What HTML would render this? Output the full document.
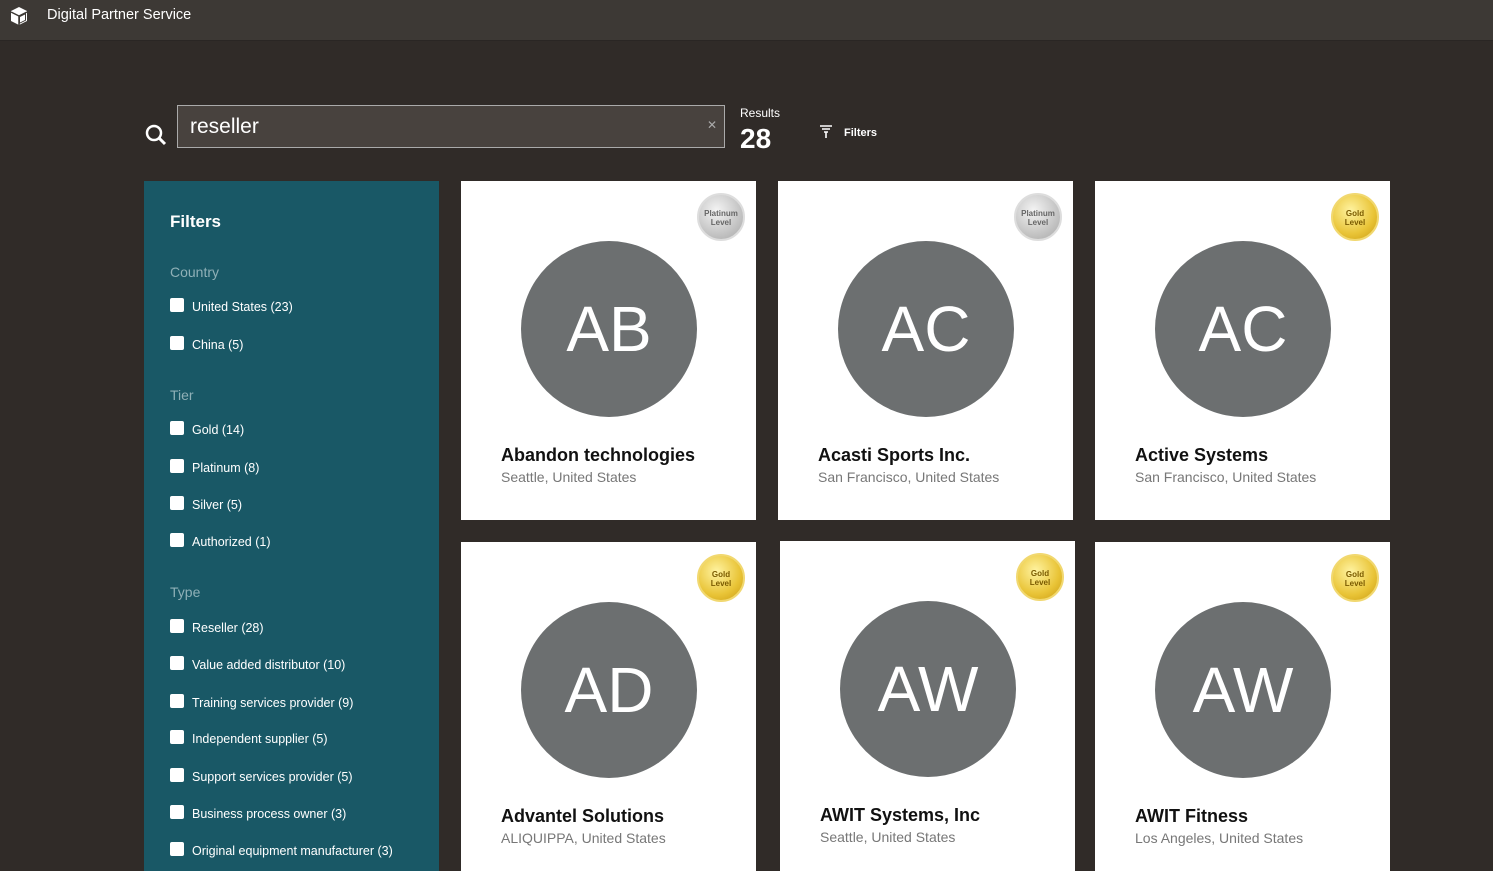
<!DOCTYPE html>
<html style="overflow:hidden;width:1493px;height:871px"><head><meta charset="utf-8"><style>
*{margin:0;padding:0;box-sizing:border-box}
body{width:1493px;height:871px;overflow:hidden;background:#302b28;font-family:"Liberation Sans",sans-serif;position:relative}
.hdr{position:absolute;left:0;top:0;width:1493px;height:41px;background:#3d3935;border-bottom:1px solid #2a2624}
.hdr span{position:absolute;left:47px;top:7px;color:#fff;font-size:14.5px}
.search{position:absolute;left:177px;top:105px;width:548px;height:43px;border:1px solid #aaa;background:#48423e}
.search span{position:absolute;left:12px;top:9px;color:#fff;font-size:21px}
.search i{position:absolute;right:7px;top:12px;color:#aaa;font-style:normal;font-size:12px}
.panel{position:absolute;left:144px;top:181px;width:295px;height:690px;background:#195866;color:#fff}
.panel h2{position:absolute;left:26px;top:31px;font-size:17px}
.sec{position:absolute;left:26px;color:#8fb0b7;font-size:14px}
.cb{position:absolute;left:26px;font-size:12.5px;white-space:nowrap}
.cb b{display:inline-block;width:14px;height:14px;background:#fff;border-radius:2px;vertical-align:-1px;margin-right:8px}
.card{position:absolute;width:295px;height:339px;background:#fff;overflow:hidden}
.av{position:absolute;left:60px;top:60px;width:176px;height:176px;border-radius:50%;background:#6c6f70;color:#fff;font-size:64px;text-align:center;line-height:176px}
.nm{position:absolute;left:40px;top:264px;font-size:18px;font-weight:bold;color:#111}
.loc{position:absolute;left:40px;top:288px;font-size:14px;color:#777}
.md{position:absolute;left:236px;top:12px;width:48px;height:48px;border-radius:50%;text-align:center;font-size:8px;line-height:9px;padding-top:14px;font-weight:bold}
.pl{background:radial-gradient(circle at 40% 35%,#f4f4f4,#bdbdbd 70%,#a8a8a8);color:#666;border:2px solid #ddd}
.go{background:radial-gradient(circle at 40% 35%,#fff3a0,#e9c437 60%,#c99a10);color:#7a5a00;border:2px solid #f1d870}
</style></head><body>
<div class="hdr">
<svg style="position:absolute;left:8px;top:5px" width="22" height="22" viewBox="0 0 22 22"><path d="M11 2 L19 6 L19 16 L11 20 L3 16 L3 6 Z" fill="#fff"/><path d="M11 11 L19 7 M11 11 L3 7 M11 11 V20" stroke="#3d3935" stroke-width="1.5"/><path d="M11 11 L18 7.5 L18 15.5 L11 19 Z" fill="#3d3935"/><path d="M12 12 L17 9.5 L17 15 L12 17.5 Z" fill="#fff"/></svg>
<span>Digital Partner Service</span></div>
<svg style="position:absolute;left:144px;top:123px" width="24" height="24" viewBox="0 0 24 24"><circle cx="10" cy="10" r="7" stroke="#fff" stroke-width="2.5" fill="none"/><path d="M15 15 L21 21" stroke="#fff" stroke-width="3"/></svg>
<div class="search"><span>reseller</span><i>✕</i></div>
<div style="position:absolute;left:740px;top:106px;color:#fff;font-size:12px">Results</div>
<div style="position:absolute;left:740px;top:123px;color:#fff;font-size:28px;font-weight:bold">28</div>
<svg style="position:absolute;left:820px;top:125px" width="12" height="14" viewBox="0 0 12 14"><path d="M0 1H12M2 4H10M4 7H8M6 7V13" stroke="#fff" stroke-width="1.6"/></svg>
<div style="position:absolute;left:844px;top:127px;color:#fff;font-size:11px;font-weight:bold">Filters</div>
<div class="panel"><h2>Filters</h2>
<div class="sec" style="top:83px">Country</div>
<div class="cb" style="top:117px"><b></b>United States (23)</div>
<div class="cb" style="top:155px"><b></b>China (5)</div>
<div class="sec" style="top:206px">Tier</div>
<div class="cb" style="top:240px"><b></b>Gold (14)</div>
<div class="cb" style="top:278px"><b></b>Platinum (8)</div>
<div class="cb" style="top:315px"><b></b>Silver (5)</div>
<div class="cb" style="top:352px"><b></b>Authorized (1)</div>
<div class="sec" style="top:403px">Type</div>
<div class="cb" style="top:438px"><b></b>Reseller (28)</div>
<div class="cb" style="top:475px"><b></b>Value added distributor (10)</div>
<div class="cb" style="top:513px"><b></b>Training services provider (9)</div>
<div class="cb" style="top:549px"><b></b>Independent supplier (5)</div>
<div class="cb" style="top:587px"><b></b>Support services provider (5)</div>
<div class="cb" style="top:624px"><b></b>Business process owner (3)</div>
<div class="cb" style="top:661px"><b></b>Original equipment manufacturer (3)</div>
</div>
<div class="card" style="left:461px;top:181px"><div class="md pl">Platinum<br>Level</div><div class="av">AB</div><div class="nm">Abandon technologies</div><div class="loc">Seattle, United States</div></div>
<div class="card" style="left:778px;top:181px"><div class="md pl">Platinum<br>Level</div><div class="av">AC</div><div class="nm">Acasti Sports Inc.</div><div class="loc">San Francisco, United States</div></div>
<div class="card" style="left:1095px;top:181px"><div class="md go">Gold<br>Level</div><div class="av">AC</div><div class="nm">Active Systems</div><div class="loc">San Francisco, United States</div></div>
<div class="card" style="left:461px;top:542px"><div class="md go">Gold<br>Level</div><div class="av">AD</div><div class="nm">Advantel Solutions</div><div class="loc">ALIQUIPPA, United States</div></div>
<div class="card" style="left:780px;top:541px"><div class="md go">Gold<br>Level</div><div class="av">AW</div><div class="nm">AWIT Systems, Inc</div><div class="loc">Seattle, United States</div></div>
<div class="card" style="left:1095px;top:542px"><div class="md go">Gold<br>Level</div><div class="av">AW</div><div class="nm">AWIT Fitness</div><div class="loc">Los Angeles, United States</div></div>
</body></html>
